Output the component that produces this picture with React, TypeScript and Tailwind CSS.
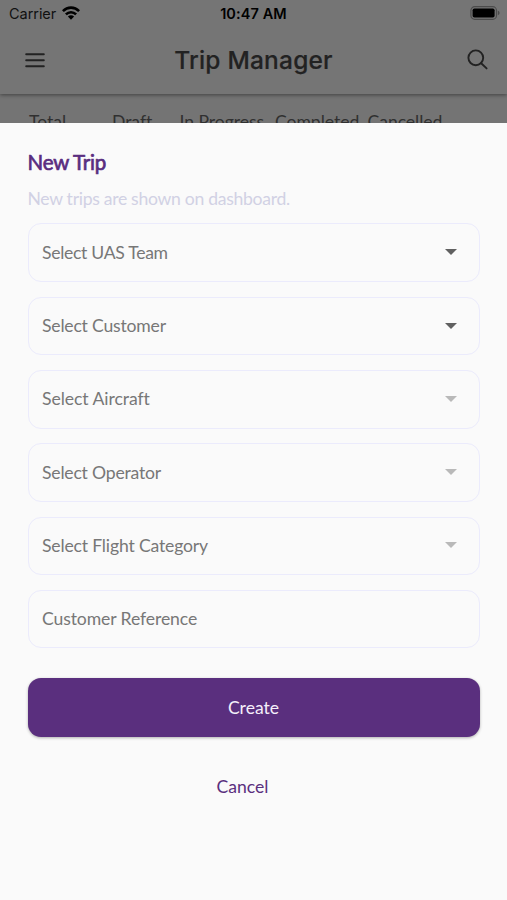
interface Field {
  label: string
  tracking: string
  select: boolean
  enabled: boolean
}

const fields: Field[] = [
  { label: 'Select UAS Team', tracking: 'tracking-[-0.3px]', select: true, enabled: true },
  { label: 'Select Customer', tracking: 'tracking-[-0.2px]', select: true, enabled: true },
  { label: 'Select Aircraft', tracking: 'tracking-[-0.06px]', select: true, enabled: false },
  { label: 'Select Operator', tracking: 'tracking-[-0.2px]', select: true, enabled: false },
  { label: 'Select Flight Category', tracking: 'tracking-[-0.17px]', select: true, enabled: false },
  { label: 'Customer Reference', tracking: 'tracking-[-0.11px]', select: false, enabled: true },
]

const tabs = [
  { label: 'Total', width: 'w-[83px]' },
  { label: 'Draft', width: 'w-[67.5px]' },
  { label: 'In Progress', width: 'w-[95.5px]' },
  { label: 'Completed', width: 'w-[92.5px]' },
  { label: 'Cancelled', width: 'w-[80px]' },
]

function WifiIcon() {
  return (
    <svg className="-mt-0.5 ml-1.5 h-[14px] w-[18px]" viewBox="0 0 18 14" fill="none" stroke="#000" strokeWidth="2.6">
      <path d="M0.9 5.1C5.5 0.5 12.5 0.5 17.1 5.1" />
      <path d="M3.9 8.4C6.8 5.5 11.2 5.5 14.1 8.4" />
      <path d="M5.9 10.6C7.6 8.9 10.4 8.9 12.1 10.6L9 13.8Z" fill="#000" stroke="none" />
    </svg>
  )
}

function BatteryIcon() {
  return (
    <svg className="-mt-0.5 h-[14px] w-[31px]" viewBox="0 0 31 14">
      <rect x="0.9" y="0.7" width="25.6" height="12.6" rx="3.8" fill="none" stroke="#000" strokeOpacity="0.35" strokeWidth="1.2" />
      <rect x="2.6" y="2.4" width="22" height="9.2" rx="1.8" fill="#000" />
      <path d="M27.9 4.8C30.1 5.4 30.1 8.6 27.9 9.2Z" fill="#000" fillOpacity="0.35" />
    </svg>
  )
}

function StatusBar() {
  return (
    <div className="grid h-[27px] grid-cols-3 items-center pl-[9px] pr-[6px] text-[14.5px] text-black">
      <div className="flex items-center">
        <span className="tracking-[-0.05px] text-[#111]">Carrier</span>
        <WifiIcon />
      </div>
      <span className="pr-[3px] text-center font-semibold tracking-[0.1px] whitespace-nowrap">10:47 AM</span>
      <div className="flex justify-end">
        <BatteryIcon />
      </div>
    </div>
  )
}

function AppBar() {
  return (
    <div className="flex h-[65px] items-center justify-between pl-[25px] pr-[18px] text-[#222]">
      <svg className="h-5 w-5" viewBox="0 0 20 20" stroke="currentColor" strokeWidth="2" strokeLinecap="round">
        <path d="M1.2 4.2H18.8M1.2 10.2H18.8M1.2 16.2H18.8" />
      </svg>
      <h1 className="pt-[1px] pr-[5px] text-[24.5px] leading-none font-medium tracking-[0.2px] [-webkit-text-stroke:0.2px]">
        Trip Manager
      </h1>
      <svg className="h-[22px] w-[22px]" viewBox="0 0 22 22" fill="none" stroke="currentColor" strokeWidth="1.9" strokeLinecap="round">
        <circle cx="8.8" cy="8.8" r="7.4" />
        <path d="M14.2 14.2L19.6 19.4" />
      </svg>
    </div>
  )
}

function FormField({ field }: { field: Field }) {
  return (
    <div className="flex h-[58.7px] items-center justify-between rounded-[13px] border-[1.5px] border-[#ebebfc] pl-[13.5px] pr-[22px]">
      <span className={`pt-[0.6px] text-[17.6px] text-[#777] ${field.tracking}`}>{field.label}</span>
      {field.select && (
        <svg
          className={`mb-[1px] h-1.5 w-3 ${field.enabled ? 'text-[#606060]' : 'text-[#b9b9b9]'}`}
          viewBox="0 0 12 6"
          fill="currentColor"
        >
          <path d="M0 0H12L6 6Z" />
        </svg>
      )}
    </div>
  )
}

export default function App() {
  return (
    <div className="flex h-[900px] w-full flex-col overflow-hidden bg-[#fafafa] font-['Lato',sans-serif]">
      <header className="h-[123px] shrink-0 overflow-hidden bg-[#747474]">
        <div className="relative h-[94px] bg-[#757575] font-['Inter',sans-serif] shadow-[0_1px_4px_rgba(0,0,0,0.45)]">
          <StatusBar />
          <AppBar />
        </div>
        <div className="flex pt-[17px] pl-[29px] text-[17.6px] leading-[22px] text-[#303030]">
          {tabs.map(tab => (
            <span key={tab.label} className={`shrink-0 tracking-[-0.05px] whitespace-nowrap ${tab.width}`}>
              {tab.label}
            </span>
          ))}
        </div>
      </header>

      <main className="flex flex-1 flex-col px-[27.5px] pt-[27px]">
        <h2 className="text-[20.5px] leading-6 font-normal tracking-[-0.2px] text-[#5a2d7f] [-webkit-text-stroke:0.7px]">
          New Trip
        </h2>
        <p className="mt-[13px] text-[17.6px] leading-6 tracking-[-0.3px] text-[#d1d1e4]">
          New trips are shown on dashboard.
        </p>
        <div className="mt-[12.4px] flex flex-col gap-[14.6px]">
          {fields.map(field => (
            <FormField key={field.label} field={field} />
          ))}
        </div>
        <button className="mt-[29.6px] h-[59px] shrink-0 rounded-[13px] bg-[#5a2f7e] pt-[2px] text-[17.6px] text-[#f5effa] shadow-[0_1px_3px_rgba(0,0,0,0.3)]">
          Create
        </button>
        <button className="mt-[38px] mr-[22px] self-center text-[17.6px] leading-6 text-[#5a2f7e]">Cancel</button>
      </main>
    </div>
  )
}
